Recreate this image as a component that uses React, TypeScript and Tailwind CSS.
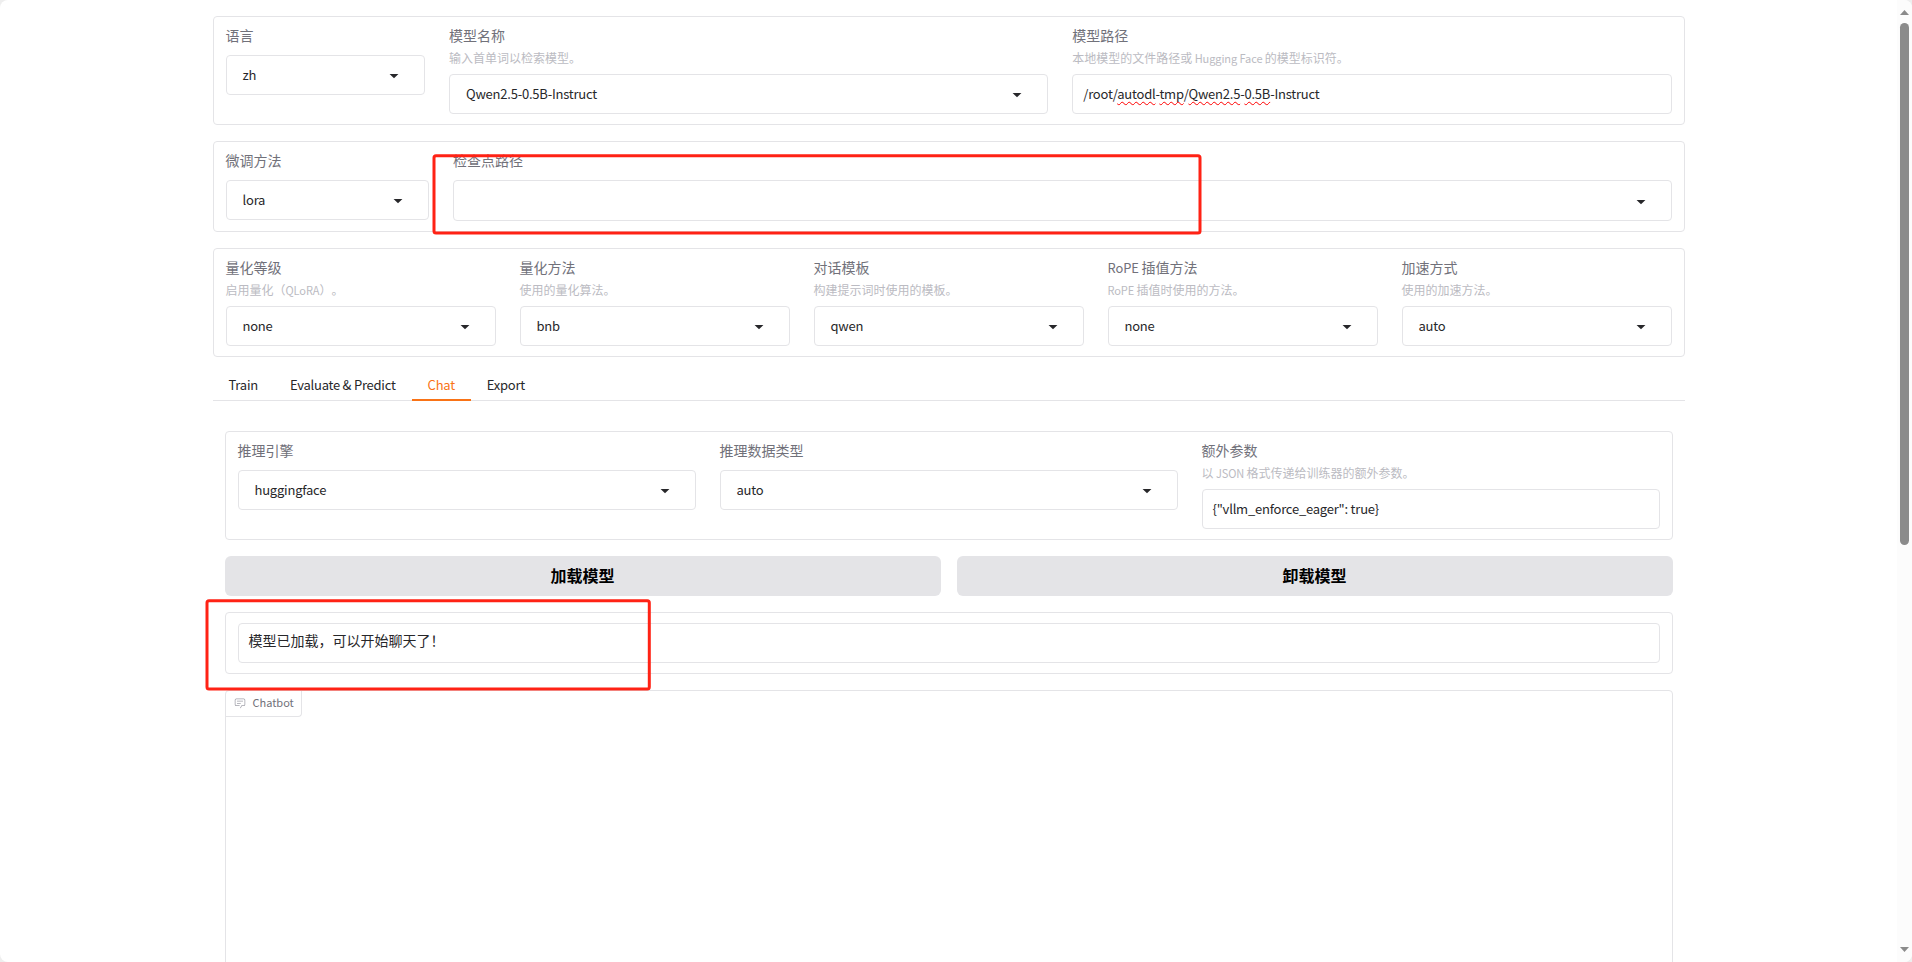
import type { ReactNode } from 'react';

interface FieldProps {
  label?: string;
  info?: string;
  className?: string;
  children: ReactNode;
}

const tabs = ['Train', 'Evaluate & Predict', 'Chat', 'Export'];

const quantFields = [
  { label: '量化等级', info: '启用量化（QLoRA）。', value: 'none' },
  { label: '量化方法', info: '使用的量化算法。', value: 'bnb' },
  { label: '对话模板', info: '构建提示词时使用的模板。', value: 'qwen' },
  { label: 'RoPE 插值方法', info: 'RoPE 插值时使用的方法。', value: 'none' },
  { label: '加速方式', info: '使用的加速方法。', value: 'auto' },
];

// Latin runs are set slightly smaller than the Chinese around them
function MixedText({ text }: { text: string }) {
  return (
    <>
      {text.split(/([A-Za-z ]+)/).map((part, index) =>
        index % 2 === 1 ? (
          <span key={index} className="text-[0.92em] tracking-[-0.1px]">
            {part}
          </span>
        ) : (
          part
        )
      )}
    </>
  );
}

function Panel({ className = '', children }: { className?: string; children: ReactNode }) {
  return <div className={`flex rounded border border-[#e4e4e7] ${className}`}>{children}</div>;
}

function Field({ label, info, className = 'flex-1', children }: FieldProps) {
  return (
    <div className={`min-w-0 px-3 py-2.5 ${className}`}>
      {label && (
        <div className={`h-5 text-sm leading-4 text-[#71717a] ${info ? '' : 'mb-2'}`}>
          <MixedText text={label} />
        </div>
      )}
      {info && (
        <div className="mb-[7px] h-5 pt-[3px] text-xs leading-4 text-[#bbbbc2] [text-spacing-trim:space-all]">
          <MixedText text={info} />
        </div>
      )}
      {children}
    </div>
  );
}

function Dropdown({ value, className = 'h-10' }: { value: string; className?: string }) {
  return (
    <div className={`flex items-center justify-between rounded border border-[#e4e4e7] pl-4 pr-5 ${className}`}>
      <span className="pb-px text-[13px] leading-5 tracking-[-0.22px] text-[#27272a]">{value}</span>
      <svg className="size-5 text-[#27272a]" viewBox="0 0 18 18" fill="currentColor">
        <path d="M5 8l4 4 4-4z" />
      </svg>
    </div>
  );
}

function TextInput({ className = 'pb-px text-[13px] tracking-[-0.22px]', children }: { className?: string; children: ReactNode }) {
  return (
    <div className={`flex h-10 items-center rounded border border-[#e4e4e7] px-2.5 leading-5 text-[#27272a] ${className}`}>
      <span>{children}</span>
    </div>
  );
}

function Misspelled({ children }: { children: ReactNode }) {
  return (
    <span className="underline decoration-[#ff0000] decoration-wavy decoration-[1.2px] underline-offset-[1.5px] [text-decoration-skip-ink:none]">
      {children}
    </span>
  );
}

function Scrollbar() {
  return (
    <div className="flex w-[15px] flex-col items-center justify-between bg-[#fcfcfc] pt-2.5 pb-2.5">
      <div className="flex flex-col items-center gap-2">
        <svg className="h-[5px] w-[9px]" viewBox="0 0 9 5" fill="#8b8b8b">
          <path d="M0 5L4.5 0 9 5z" />
        </svg>
        <div className="h-[522px] w-[9px] rounded-full bg-[#8b8b8b]" />
      </div>
      <svg className="h-[5px] w-[9px]" viewBox="0 0 9 5" fill="#8b8b8b">
        <path d="M0 0L4.5 5 9 0z" />
      </svg>
    </div>
  );
}

export default function App() {
  return (
    <div className="h-[962px] w-[1912px] overflow-hidden bg-[#eeeeee] font-['Noto_Sans_CJK_SC',sans-serif]">
      <div className="relative flex h-full overflow-hidden rounded-lg bg-white">
        <main className="flex-1 overflow-hidden">
          <div className="mx-auto flex max-w-[1536px] flex-col px-8 pt-4">
            <div className="flex flex-col gap-4">
              <Panel className="h-[109px]">
                <Field label="语言" className="w-[223.5px]">
                  <Dropdown value="zh" />
                </Field>
                <Field label="模型名称" info="输入首单词以检索模型。">
                  <Dropdown value="Qwen2.5-0.5B-Instruct" />
                </Field>
                <Field label="模型路径" info="本地模型的文件路径或 Hugging Face 的模型标识符。">
                  <TextInput>
                    /root/<Misspelled>autodl</Misspelled>-<Misspelled>tmp</Misspelled>/<Misspelled>Qwen2.5</Misspelled>-
                    <Misspelled>0.5B</Misspelled>-Instruct
                  </TextInput>
                </Field>
              </Panel>

              <Panel className="h-[91px]">
                <Field label="微调方法" className="w-[227.5px]">
                  <Dropdown value="lora" />
                </Field>
                <Field label="检查点路径">
                  <Dropdown value="" className="h-[41px]" />
                </Field>
              </Panel>

              <Panel className="h-[109px]">
                {quantFields.map((field) => (
                  <Field key={field.label} label={field.label} info={field.info}>
                    <Dropdown value={field.value} />
                  </Field>
                ))}
              </Panel>
            </div>

            <div className="mt-2 flex h-9 border-b border-[#e4e4e7]">
              {tabs.map((tab) => (
                <button
                  key={tab}
                  className={`-mb-px h-9 border-b-2 px-4 pt-1.5 text-[13px] leading-5 tracking-[-0.24px] ${
                    tab === 'Chat' ? 'border-[#f97316] text-[#f97316]' : 'border-transparent text-[#27272a]'
                  }`}
                >
                  {tab}
                </button>
              ))}
            </div>

            <div className="flex flex-col gap-4 px-3 pt-[30px]">
              <Panel className="h-[109px]">
                <Field label="推理引擎">
                  <Dropdown value="huggingface" />
                </Field>
                <Field label="推理数据类型">
                  <Dropdown value="auto" />
                </Field>
                <Field label="额外参数" info="以 JSON 格式传递给训练器的额外参数。">
                  <TextInput>{'{"vllm_enforce_eager": true}'}</TextInput>
                </Field>
              </Panel>

              <div className="flex h-10 gap-4">
                <button className="flex-1 rounded-md bg-[#e4e4e7] pb-0.5 text-base font-bold text-black">加载模型</button>
                <button className="flex-1 rounded-md bg-[#e4e4e7] pb-0.5 text-base font-bold text-black">卸载模型</button>
              </div>

              <Panel className="h-[62px]">
                <Field>
                  <TextInput className="pb-[7px] text-sm">模型已加载，可以开始聊天了！</TextInput>
                </Field>
              </Panel>

              <div className="h-[400px] rounded border border-[#e4e4e7]">
                <div className="flex h-[26px] w-[76px] items-center gap-[7px] rounded-br border-r border-b border-[#e4e4e7] pb-0.5 pl-2 text-[11px] text-[#71717a]">
                  <svg className="size-3 shrink-0 text-[#a1a1aa]" viewBox="0 0 32 32" fill="currentColor">
                    <path d="M17.74 30L16 29l4-7h6a2 2 0 0 0 2-2V8a2 2 0 0 0-2-2H6a2 2 0 0 0-2 2v12a2 2 0 0 0 2 2h9v2H6a4 4 0 0 1-4-4V8a4 4 0 0 1 4-4h20a4 4 0 0 1 4 4v12a4 4 0 0 1-4 4h-4.84Z" />
                    <path d="M8 10h16v2H8zm0 6h10v2H8z" />
                  </svg>
                  Chatbot
                </div>
              </div>
            </div>
          </div>
        </main>

        <Scrollbar />

        {/* red highlight boxes */}
        <svg className="pointer-events-none absolute inset-0 size-full" fill="none" stroke="#ff2215" strokeWidth="3">
          <rect x="434" y="155.7" width="766" height="77.3" rx="2" />
          <rect x="207" y="600.7" width="442.3" height="88.3" rx="2" />
        </svg>
      </div>
    </div>
  );
}
